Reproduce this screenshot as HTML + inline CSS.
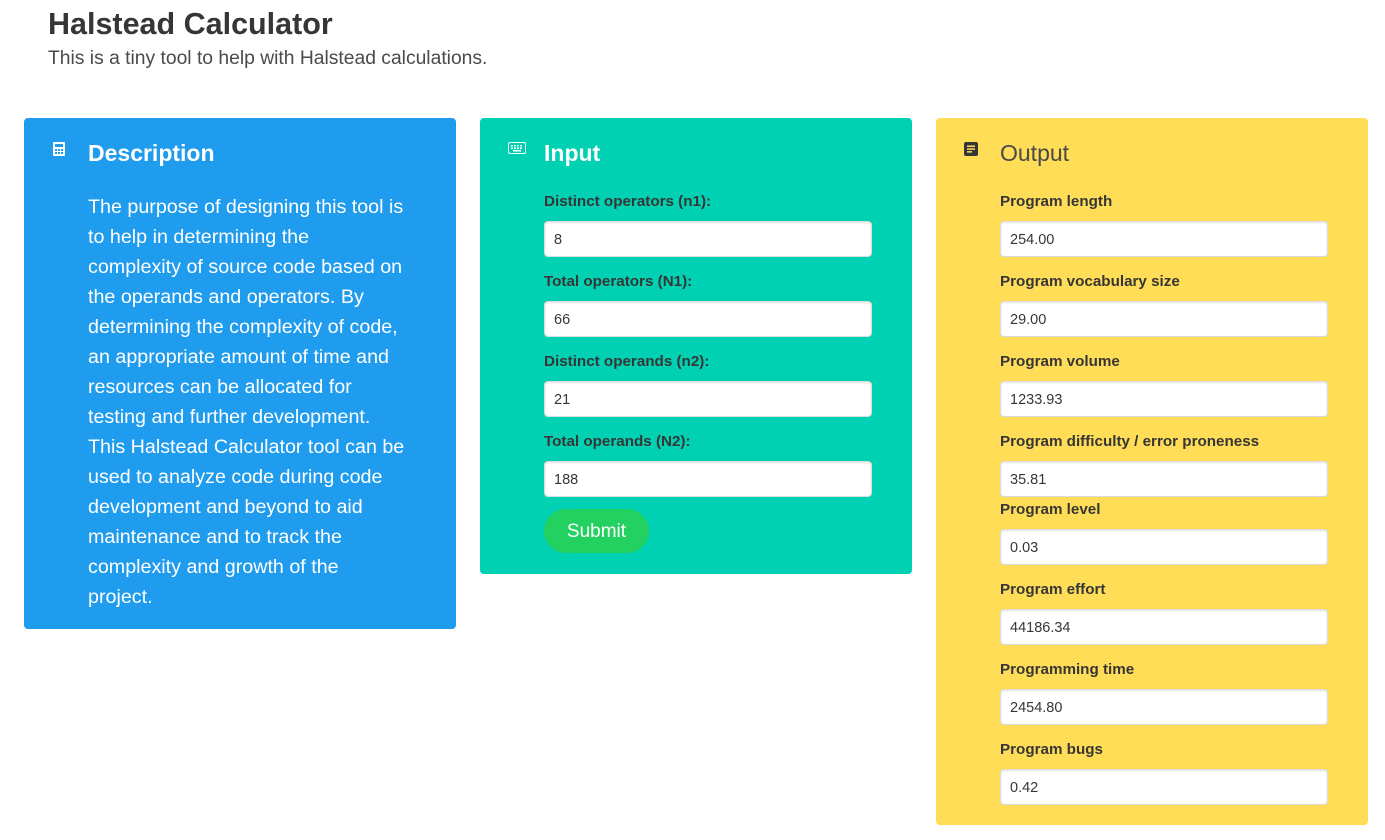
<!DOCTYPE html>
<html><head><meta charset="utf-8"><style>
*{box-sizing:border-box;margin:0;padding:0}
body{width:1385px;height:840px;background:#fff;font-family:"Liberation Sans",sans-serif;color:#363636;position:relative;overflow:hidden}
h1{position:absolute;left:48px;top:7px;font-size:30.5px;font-weight:bold;color:#363636}
.sub{position:absolute;left:48px;top:48px;font-size:19.3px;color:#4a4a4a}
.card{position:absolute;top:118px;width:432px;border-radius:4px}
.ic{position:absolute;left:28px;top:24px}
.h{position:absolute;left:64px;top:22px;font-size:23px;font-weight:bold}
.desc{position:absolute;left:64px;top:74px;font-size:19.7px;line-height:30px;color:#fff;white-space:nowrap}
.lab{position:absolute;left:64px;font-size:15.2px;font-weight:bold;color:#363636}
.inp{position:absolute;left:64px;width:328px;height:36px;background:#fff;border:1px solid #dbdbdb;border-radius:4px;font-size:14.5px;padding:10px 9px 0;color:#363636;box-shadow:inset 0 1px 2px rgba(10,10,10,.1)}
.btn{position:absolute;left:64px;top:391px;width:105px;height:44px;border-radius:22px;background:#23d160;color:#fff;font-size:19px;text-align:center;line-height:46px}
</style></head><body>
<h1>Halstead Calculator</h1>
<div class="sub">This is a tiny tool to help with Halstead calculations.</div>

<div class="card" style="left:24px;height:511px;background:#209cee;color:#fff">
<svg class="ic" width="14" height="14" viewBox="0 0 14 14"><rect x="1" y="0" width="12" height="14" rx="1" fill="#fff"/><rect x="3" y="2" width="8" height="3" fill="#209cee"/><g fill="#209cee"><rect x="3" y="7" width="2" height="2"/><rect x="6" y="7" width="2" height="2"/><rect x="9" y="7" width="2" height="2"/><rect x="3" y="10" width="2" height="2"/><rect x="6" y="10" width="2" height="2"/><rect x="9" y="10" width="2" height="2"/></g></svg>
<div class="h">Description</div>
<div class="desc">The purpose of designing this tool is<br>to help in determining the<br>complexity of source code based on<br>the operands and operators. By<br>determining the complexity of code,<br>an appropriate amount of time and<br>resources can be allocated for<br>testing and further development.<br>This Halstead Calculator tool can be<br>used to analyze code during code<br>development and beyond to aid<br>maintenance and to track the<br>complexity and growth of the<br>project.</div>
</div>

<div class="card" style="left:480px;height:456px;background:#00d1b2;color:#fff">
<svg class="ic" width="18" height="12" viewBox="0 0 18 12"><rect x="0.5" y="0.5" width="17" height="11" rx="1.5" fill="none" stroke="#fff"/><g fill="#fff"><rect x="3" y="3" width="2" height="1.5"/><rect x="6" y="3" width="2" height="1.5"/><rect x="9" y="3" width="2" height="1.5"/><rect x="12" y="3" width="2" height="1.5"/><rect x="3" y="5.5" width="2" height="1.5"/><rect x="6" y="5.5" width="2" height="1.5"/><rect x="9" y="5.5" width="2" height="1.5"/><rect x="12" y="5.5" width="2" height="1.5"/><rect x="5" y="8" width="8" height="1.5"/></g></svg>
<div class="h">Input</div>
<div class="lab" style="top:75px">Distinct operators (n1):</div><div class="inp" style="top:103px">8</div>
<div class="lab" style="top:155px">Total operators (N1):</div><div class="inp" style="top:183px">66</div>
<div class="lab" style="top:235px">Distinct operands (n2):</div><div class="inp" style="top:263px">21</div>
<div class="lab" style="top:315px">Total operands (N2):</div><div class="inp" style="top:343px">188</div>
<div class="btn">Submit</div>
</div>

<div class="card" style="left:936px;height:707px;background:#ffdd57;color:#363636">
<svg class="ic" width="14" height="14" viewBox="0 0 14 14"><rect x="0" y="0" width="14" height="14" rx="2" fill="#363636"/><g fill="#ffdd57"><rect x="3" y="3.5" width="8" height="1.5"/><rect x="3" y="6.3" width="8" height="1.5"/><rect x="3" y="9.1" width="5" height="1.5"/></g></svg>
<div class="h" style="font-weight:normal;color:#4a4a4a">Output</div>
<div class="lab" style="top:75px">Program length</div><div class="inp" style="top:103px">254.00</div>
<div class="lab" style="top:155px">Program vocabulary size</div><div class="inp" style="top:183px">29.00</div>
<div class="lab" style="top:235px">Program volume</div><div class="inp" style="top:263px">1233.93</div>
<div class="lab" style="top:315px">Program difficulty / error proneness</div><div class="inp" style="top:343px">35.81</div>
<div class="lab" style="top:383px">Program level</div><div class="inp" style="top:411px">0.03</div>
<div class="lab" style="top:463px">Program effort</div><div class="inp" style="top:491px">44186.34</div>
<div class="lab" style="top:543px">Programming time</div><div class="inp" style="top:571px">2454.80</div>
<div class="lab" style="top:623px">Program bugs</div><div class="inp" style="top:651px">0.42</div>
</div>
</body></html>
